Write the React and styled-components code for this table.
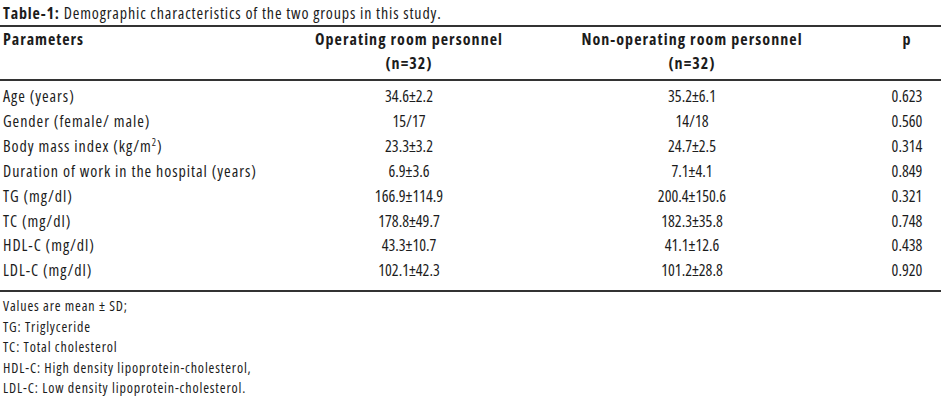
import React from 'react';
import styled, { createGlobalStyle } from 'styled-components';

const Global = createGlobalStyle`
body {
  margin: 0;
  background: #fff;
}
`;

const Wrap = styled.div`
  width: 941px;
  height: 412px;
  overflow: hidden;
  font-family: "Open Sans", "DejaVu Sans Condensed", sans-serif;
  font-stretch: 75%;
  color: #1c1c1c;
`;

const Title = styled.div`
  font-size: 16px;
  line-height: 24px;
  letter-spacing: 0.85px;
  padding: 1px 3px 0;
  height: 24px;
  border-bottom: 2px solid #333;

  b {
    font-weight: 700;
  }
`;

const Row = styled.div`
  display: grid;
  grid-template-columns: 299px 220px 346px 76px;
  align-items: start;
`;

const HeadRow = styled(Row)`
  font-weight: 700;
  font-size: 16px;
  line-height: 24px;
  letter-spacing: 1.05px;
  padding: 0 0 4px;
  border-bottom: 2px solid #333;
`;

const Body = styled.div`
  padding: 3px 0 7px;
  border-bottom: 2px solid #333;
  font-size: 16px;
  line-height: 24.9px;
`;

const Cell = styled.div`
  text-align: ${p => (p.$left ? 'left' : 'center')};
  padding-left: ${p => (p.$left ? '3px' : p.$p ? '8px' : '0')};
  letter-spacing: ${p => (p.$left ? '0.95px' : 'inherit')};

  sup {
    font-size: 10px;
    line-height: 0;
  }
`;

const Notes = styled.div`
  font-size: 14px;
  line-height: 20.5px;
  letter-spacing: 0.85px;
  padding: 4px 3px 0;
`;

const rows = [
  ['Age (years)', '34.6±2.2', '35.2±6.1', '0.623'],
  ['Gender (female/ male)', '15/17', '14/18', '0.560'],
  [<>Body mass index (kg/m<sup>2</sup>)</>, '23.3±3.2', '24.7±2.5', '0.314'],
  ['Duration of work in the hospital (years)', '6.9±3.6', '7.1±4.1', '0.849'],
  ['TG (mg/dl)', '166.9±114.9', '200.4±150.6', '0.321'],
  ['TC (mg/dl)', '178.8±49.7', '182.3±35.8', '0.748'],
  ['HDL-C (mg/dl)', '43.3±10.7', '41.1±12.6', '0.438'],
  ['LDL-C (mg/dl)', '102.1±42.3', '101.2±28.8', '0.920'],
];

const notes = [
  'Values are mean ± SD;',
  'TG: Triglyceride',
  'TC: Total cholesterol',
  'HDL-C: High density lipoprotein-cholesterol,',
  'LDL-C: Low density lipoprotein-cholesterol.',
];

export default function App() {
  return (
    <Wrap>
      <Global />
      <Title>
        <b>Table-1:</b> Demographic characteristics of the two groups in this study.
      </Title>
      <HeadRow>
        <Cell $left>Parameters</Cell>
        <Cell>Operating room personnel<br />(n=32)</Cell>
        <Cell>Non-operating room personnel<br />(n=32)</Cell>
        <Cell $p>p</Cell>
      </HeadRow>
      <Body>
        {rows.map((r, i) => (
          <Row key={i}>
            <Cell $left>{r[0]}</Cell>
            <Cell>{r[1]}</Cell>
            <Cell>{r[2]}</Cell>
            <Cell $p>{r[3]}</Cell>
          </Row>
        ))}
      </Body>
      <Notes>
        {notes.map(n => (
          <div key={n}>{n}</div>
        ))}
      </Notes>
    </Wrap>
  );
}
